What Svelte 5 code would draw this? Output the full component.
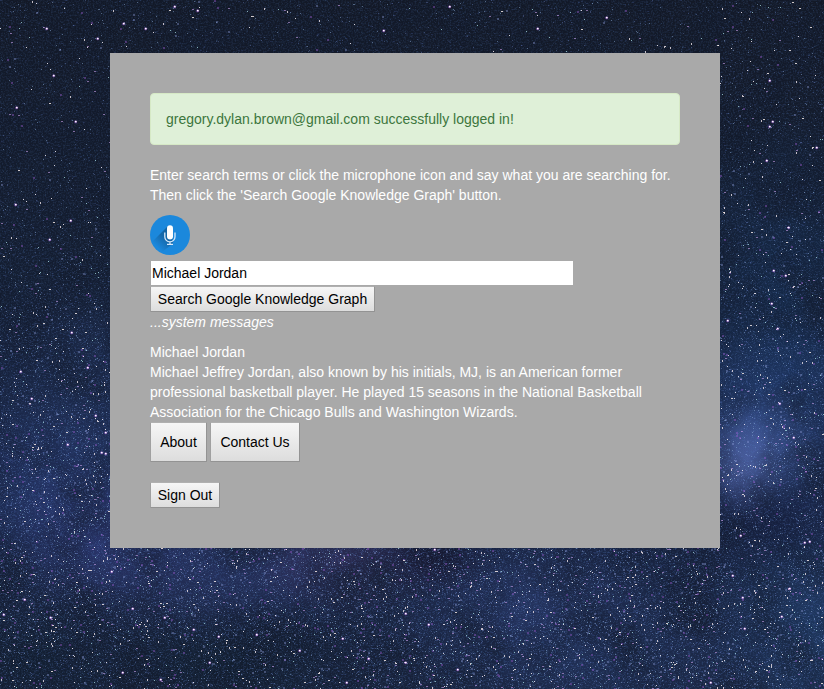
<script>
  let query = $state('Michael Jordan');

  const W = 824;
  const H = 689;

  // Deterministic generator keeps the star field stable between renders.
  let seed = 90317;
  function rand() {
    seed = (seed + 0x6d2b79f5) | 0;
    let t = Math.imul(seed ^ (seed >>> 15), 1 | seed);
    t = (t + Math.imul(t ^ (t >>> 7), 61 | t)) ^ t;
    return ((t ^ (t >>> 14)) >>> 0) / 4294967296;
  }

  // Soft light clouds: centre, radii, colour, opacity
  const clouds = [
    [775, 425, 110, 110, '#3454a0', 0.6],
    [762, 448, 62, 65, '#6277c8', 0.55],
    [742, 468, 42, 60, '#7281d0', 0.4],
    [65, 480, 130, 90, '#31468c', 0.5],
    [105, 535, 100, 75, '#3d459b', 0.45],
    [225, 568, 210, 75, '#34407f', 0.45],
    [350, 560, 110, 55, '#49376c', 0.45],
    [520, 605, 150, 80, '#30417c', 0.5],
    [790, 310, 130, 200, '#173560', 0.55],
    [820, 635, 120, 130, '#28528d', 0.5],
    [600, 665, 230, 90, '#293f78', 0.4],
    [90, 380, 120, 110, '#22345f', 0.45],
    [220, 665, 150, 60, '#101d2c', 0.7],
    [30, 660, 110, 70, '#101d2c', 0.6],
    [435, 560, 65, 38, '#15142a', 0.75],
    [250, 548, 50, 22, '#151d34', 0.5],
    [770, 520, 90, 50, '#131b38', 0.7]
  ];

  function density(x, y) {
    let d = 0.16 + 0.84 * Math.min(1, Math.max(0, (y - 180) / 300));
    if (x > 720 && y < 300) d += 0.1;
    if (y > 640 && x < 350) d *= 0.65;
    if (x > 720 && y > 480 && y < 560) d *= 0.7;
    return d;
  }

  function makeStars(count, w, h, color, opacity) {
    let d = '';
    for (let i = 0; i < count; i++) {
      const x = Math.floor(rand() * W);
      const y = Math.floor(rand() * H);
      if (rand() > density(x, y)) continue;
      if (x > 110 && x < 718 && y > 53 && y < 546) continue;
      d += `M${x} ${y}h${w}v${h}h-${w}z`;
    }
    return { d, color, opacity };
  }

  const layers = [
    makeStars(70000, 1, 1, '#4a76b4', 0.2),
    makeStars(22000, 2, 1, '#536dc0', 0.2),
    makeStars(18000, 1, 1, '#7c96dc', 0.35),
    makeStars(9000, 1, 1, '#8fb0dc', 0.5),
    makeStars(1300, 2, 2, '#a060d8', 0.4),
    makeStars(1300, 2, 2, '#8c9cd8', 0.4),
    makeStars(1500, 2, 1, '#c9a0ea', 0.6),
    makeStars(1800, 1, 1, '#a9dfe4', 0.75),
    makeStars(2300, 1, 1, '#f4edf6', 0.85),
    makeStars(1000, 1, 2, '#efe4e8', 0.8),
    makeStars(600, 2, 1, '#fff2ee', 0.8)
  ];

  const brightStars = [
    [174, 6], [197, 10], [123, 23], [97, 38], [145, 28], [46, 28],
    [449, 6], [537, 28], [606, 17], [383, 30],
    [53, 75], [16, 107], [75, 121], [70, 220], [71, 332], [49, 239], [15, 204],
    [87, 367], [20, 371], [31, 398], [95, 415], [105, 432],
    [769, 80], [769, 126], [766, 160], [788, 227], [773, 270], [771, 303],
    [777, 328], [772, 121], [785, 275], [816, 147], [727, 320],
    [67, 444], [101, 452], [105, 453], [3, 614], [50, 617], [24, 599],
    [793, 437], [779, 403], [740, 535], [804, 542], [809, 541], [732, 575],
    [742, 597], [744, 628], [789, 588], [710, 682], [781, 616],
    [111, 571], [132, 608], [164, 617], [193, 629], [218, 636], [209, 662],
    [256, 634], [299, 650], [342, 638], [346, 682], [368, 658], [405, 613],
    [428, 624], [405, 662], [457, 669], [434, 549], [160, 679], [122, 672]
  ];
</script>

<div class="page">
  <svg class="sky" viewBox="0 0 824 689" preserveAspectRatio="xMidYMid slice" aria-hidden="true">
    <defs>
      <linearGradient id="night" x1="0" y1="0" x2="0" y2="1">
        <stop offset="0" stop-color="#131927" />
        <stop offset="0.4" stop-color="#141e32" />
        <stop offset="0.7" stop-color="#192546" />
        <stop offset="1" stop-color="#172138" />
      </linearGradient>
      {#each clouds as c, i}
        <radialGradient id="cloud{i}">
          <stop offset="0" stop-color={c[4]} stop-opacity={c[5]} />
          <stop offset="0.5" stop-color={c[4]} stop-opacity={c[5] * 0.5} />
          <stop offset="1" stop-color={c[4]} stop-opacity="0" />
        </radialGradient>
      {/each}
      <filter id="dust" x="0" y="0" width="100%" height="100%" color-interpolation-filters="sRGB">
        <feTurbulence type="fractalNoise" baseFrequency="0.6" numOctaves="2" seed="8" />
        <feColorMatrix values="0 0 0 0 0.25  0 0 0 0 0.36  0 0 0 0 0.55  1.6 0 0 0 -0.68" />
      </filter>
      <filter id="mist" x="0" y="0" width="100%" height="100%" color-interpolation-filters="sRGB">
        <feTurbulence type="fractalNoise" baseFrequency="0.018" numOctaves="5" seed="14" />
        <feColorMatrix values="0 0 0 0 0.07  0 0 0 0 0.1  0 0 0 0 0.17  2.4 0 0 0 -0.95" />
      </filter>
    </defs>
    <rect width="824" height="689" fill="url(#night)" />
    {#each clouds as c, i}
      <ellipse cx={c[0]} cy={c[1]} rx={c[2]} ry={c[3]} fill="url(#cloud{i})" />
    {/each}
    <rect width="824" height="689" filter="url(#mist)" opacity="0.6" />
    <rect width="824" height="689" filter="url(#dust)" opacity="0.5" />
    {#each layers as layer}
      <path d={layer.d} fill={layer.color} opacity={layer.opacity} shape-rendering="crispEdges" />
    {/each}
    {#each brightStars as [x, y]}
      <circle cx={x + 0.7} cy={y + 0.8} r="1.5" fill="#a860e0" opacity="0.6" />
      <circle cx={x + 0.8} cy={y + 0.6} r="0.9" fill="#fff" />
    {/each}
  </svg>

  <main class="card">
    <div class="alert">gregory.dylan.brown@gmail.com successfully logged in!</div>
    <p class="intro">Enter search terms or click the microphone icon and say what you are searching for.<br />Then click the 'Search Google Knowledge Graph' button.</p>
    <button class="mic" aria-label="Speak search terms">
      <svg viewBox="0 0 40 40" width="40" height="40">
        <defs>
          <linearGradient id="micShade" x1="20" y1="17" x2="6" y2="31" gradientUnits="userSpaceOnUse">
            <stop offset="0" stop-color="#1263a2" />
            <stop offset="0.4" stop-color="#1569ab" />
            <stop offset="1" stop-color="#1b88dc" />
          </linearGradient>
        </defs>
        <circle cx="20" cy="20" r="20" fill="#1b88dc" />
        <path d="M17.5 11.5L2.5 26.5C5 31 8 34.5 12 37L23 28.5L22 20Z" fill="url(#micShade)" />
        <rect x="17" y="10.2" width="6" height="14.3" rx="3" fill="#fff" />
        <path d="M14.8 17.5v4.3a5.1 5.1 0 0 0 10.2 0v-4.3M20 27v2.5M17 29.3h6" fill="none" stroke="#d8eafb" stroke-width="1.3" />
      </svg>
    </button>
    <input class="query" type="text" aria-label="Search terms" bind:value={query} />
    <button class="btn">Search Google Knowledge Graph</button>
    <div class="messages">...system messages</div>
    <section class="result">
      <div>Michael Jordan</div>
      <div>Michael Jeffrey Jordan, also known by his initials, MJ, is an American former<br />professional basketball player. He played 15 seasons in the National Basketball<br />Association for the Chicago Bulls and Washington Wizards.</div>
    </section>
    <nav class="links">
      <button class="btn tall about">About</button>
      <button class="btn tall contact">Contact Us</button>
    </nav>
    <button class="btn signout">Sign Out</button>
  </main>
</div>

<style>
  :global(body) {
    margin: 0;
    background: #162039;
  }
  .page {
    position: relative;
    box-sizing: border-box;
    height: 689px;
    padding: 53px 104px 0 110px;
    overflow: hidden;
    font: 14px/20px "Liberation Sans", Arial, sans-serif;
    color: #fff;
  }
  .sky {
    position: absolute;
    inset: 0;
    width: 100%;
    height: 100%;
  }
  .card {
    position: relative;
    box-sizing: border-box;
    width: 610px;
    height: 495px;
    padding: 40px;
    display: flex;
    flex-direction: column;
    align-items: flex-start;
    background: #a9a9a9;
    white-space: nowrap;
  }
  .alert {
    box-sizing: border-box;
    width: 530px;
    height: 52px;
    padding: 15px;
    margin-bottom: 20px;
    border: 1px solid #d6e9c6;
    border-radius: 4px;
    background: #dff0d8;
    color: #3c763d;
  }
  .intro {
    margin: 0 0 10px;
  }
  .mic {
    width: 40px;
    height: 40px;
    padding: 0;
    border: 0;
    border-radius: 50%;
    background: none;
    cursor: pointer;
  }
  .mic svg {
    display: block;
  }
  .query {
    box-sizing: border-box;
    width: 422px;
    height: 24px;
    margin: 6px 0 1px 1px;
    padding: 0 1px;
    border: 0;
    border-radius: 0;
    outline: 0;
    background: #fff;
    color: #000;
    font: inherit;
  }
  .btn {
    box-sizing: border-box;
    width: 225px;
    height: 26px;
    margin: 0;
    padding: 0;
    border: 1px solid #939393;
    border-top-color: #b0b0b0;
    border-left-color: #a0a0a0;
    border-radius: 1px;
    background: linear-gradient(#f6f6f6, #dddddd);
    color: #000;
    font: inherit;
    text-align: center;
    white-space: nowrap;
  }
  .messages {
    font-style: italic;
    margin-bottom: 10px;
  }
  .links {
    display: flex;
    gap: 3px;
    margin-bottom: 20px;
  }
  .tall {
    height: 40px;
  }
  .about {
    width: 57px;
  }
  .contact {
    width: 90px;
  }
  .signout {
    width: 70px;
  }
</style>
